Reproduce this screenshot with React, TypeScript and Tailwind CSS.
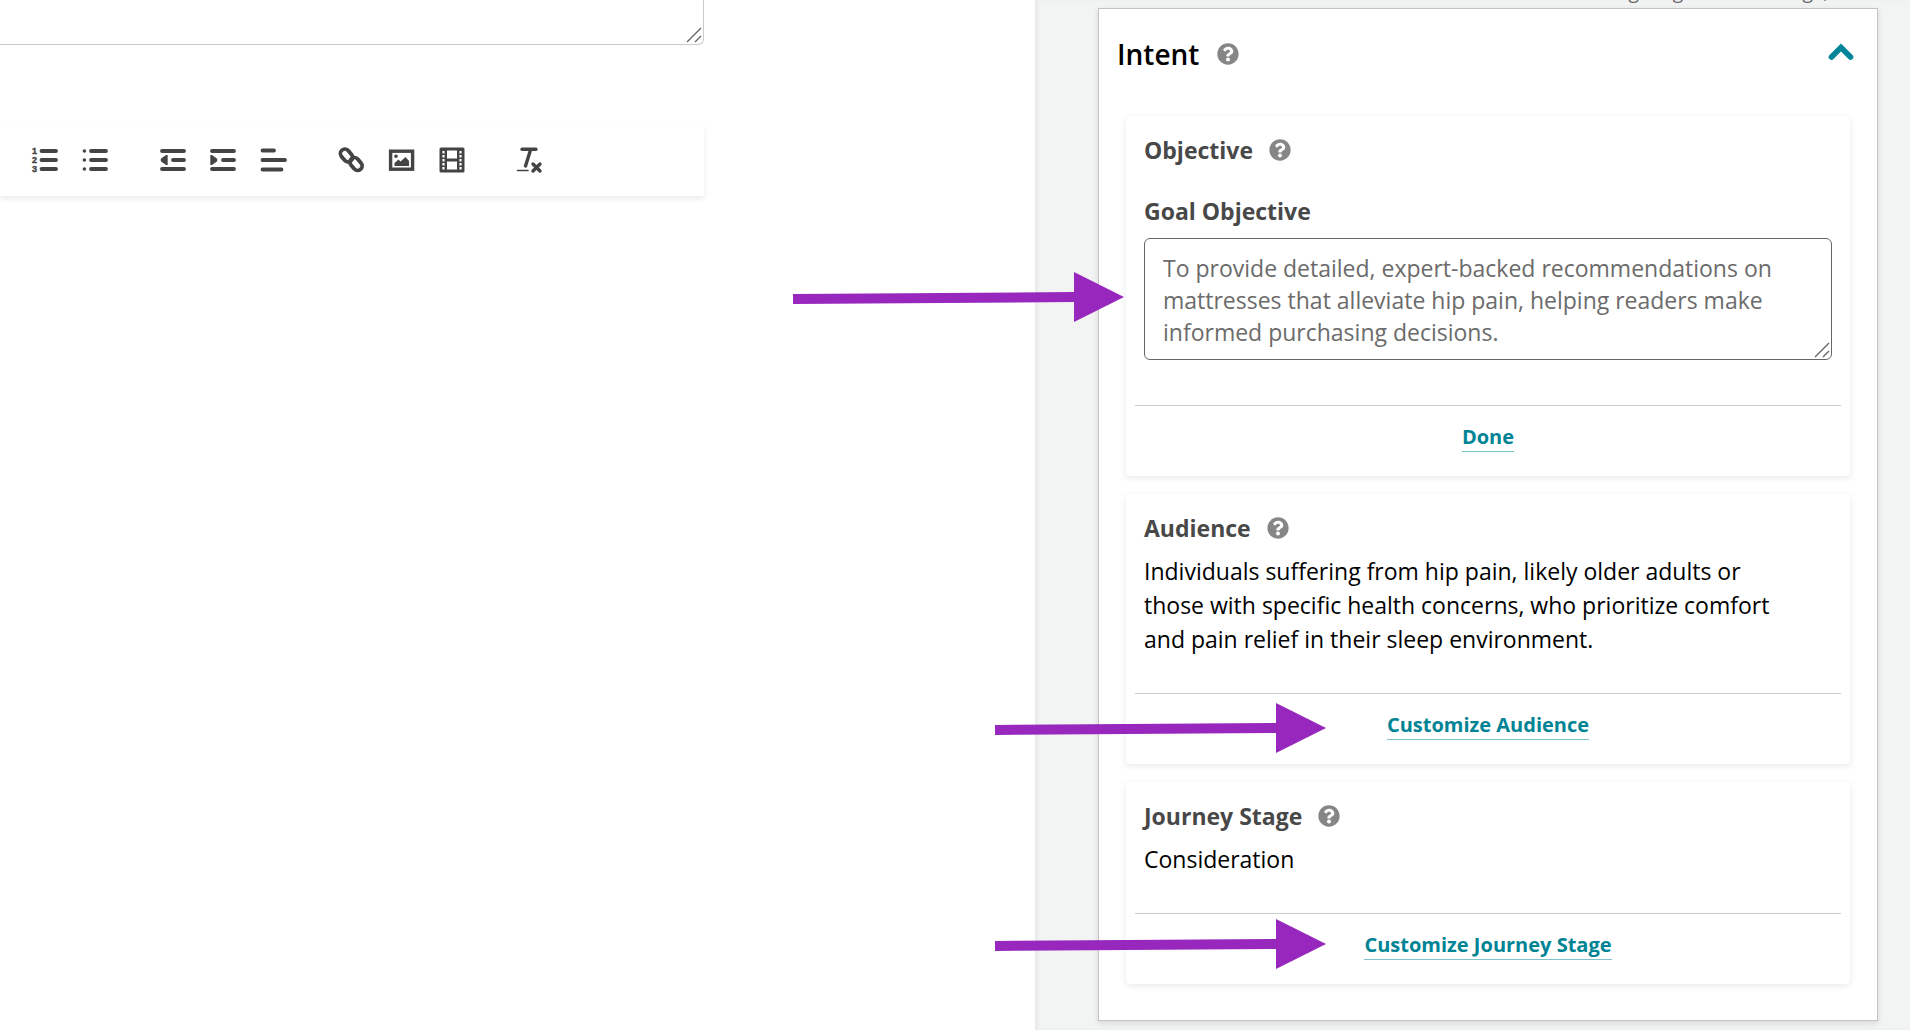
import type { ReactNode } from "react"
import { FaQuestionCircle } from "react-icons/fa"

const toolbarGroups = [
  [
    {
      label: "Numbered list",
      icon: (
        <>
          <g fontFamily="Liberation Sans" fontSize="9" fontWeight="700" fill="currentColor" stroke="currentColor" strokeWidth="0.4">
            <text x="0" y="7">1</text>
            <text x="0" y="16">2</text>
            <text x="0" y="25">3</text>
          </g>
          <path d="M9.5 4H24M9.5 13H24M9.5 22H24" />
        </>
      ),
    },
    {
      label: "Bulleted list",
      icon: (
        <>
          <path d="M9 4H24M9 13H24M9 22H24" />
          <g fill="currentColor" stroke="none">
            <circle cx="2.4" cy="4" r="1.8" />
            <circle cx="2.4" cy="13" r="1.8" />
            <circle cx="2.4" cy="22" r="1.8" />
          </g>
        </>
      ),
    },
  ],
  [
    {
      label: "Decrease indent",
      icon: (
        <>
          <path d="M2 4H24M13 13H24M2 22H24" />
          <path d="M7.7 8H6L1.2 11.5Q0 13 1.2 14.5L6 18H7.7Z" fill="currentColor" stroke="none" />
        </>
      ),
    },
    {
      label: "Increase indent",
      icon: (
        <>
          <path d="M2 4H24M13 13H24M2 22H24" />
          <path d="M0.3 8H2L6.8 11.5Q8 13 6.8 14.5L2 18H0.3Z" fill="currentColor" stroke="none" />
        </>
      ),
    },
    { label: "Align left", icon: <path d="M2.5 3.5H14M2.5 13H25M2.5 22.5H21.5" /> },
  ],
  [
    {
      label: "Insert link",
      icon: (
        <>
          <rect x="1.5" y="4" width="14" height="9" rx="4.5" transform="rotate(50 8.5 8.5)" />
          <rect x="11" y="12.5" width="14" height="9" rx="4.5" transform="rotate(50 18 17)" />
        </>
      ),
    },
    {
      label: "Insert image",
      icon: (
        <>
          <rect x="2.6" y="4.2" width="22" height="18" strokeWidth="3.4" />
          <circle cx="8" cy="9.3" r="1.8" fill="currentColor" stroke="none" />
          <path d="M6.5 19V16L10.5 12.5L12.5 14.5L17.5 10L21 14V19Z" fill="currentColor" stroke="none" />
        </>
      ),
    },
    {
      label: "Insert video",
      icon: (
        <>
          <path
            d="M2.5 0.5H25Q26.5 0.5 26.5 2V24Q26.5 25.5 25 25.5H3Q1.5 25.5 1.5 24V2Q1.5 0.5 3 0.5ZM9 3.5V11.5H19V3.5ZM9 14.5V22.5H19V14.5Z"
            fill="currentColor"
            fillRule="evenodd"
            stroke="none"
          />
          <path d="M5.5 4V23M22.5 4V23" stroke="#fff" strokeWidth="2.2" strokeDasharray="2.6 1.4" strokeLinecap="butt" />
        </>
      ),
    },
  ],
  [
    {
      label: "Clear formatting",
      icon: (
        <>
          <path d="M6 2.2H20M14.5 3L9.5 19" strokeWidth="3.4" />
          <path d="M1.5 23.5H12" strokeWidth="1.6" />
          <path d="M17 17L24 24M24 17L17 24" strokeWidth="3.4" />
        </>
      ),
    },
  ],
]

function Toolbar() {
  return (
    <div role="toolbar" aria-label="Formatting" className="flex items-center gap-[52px] h-[72px] pl-8 bg-white text-[#444] shadow-[0_3px_6px_rgba(0,0,0,0.08)]">
      {toolbarGroups.map((group, i) => (
        <div key={i} className="flex gap-6">
          {group.map((tool) => (
            <button key={tool.label} type="button" aria-label={tool.label} className="w-[26px] h-[26px]">
              <svg
                viewBox="0 0 26 26"
                fill="none"
                stroke="currentColor"
                strokeWidth="3.8"
                strokeLinecap="round"
                className="block w-full h-full overflow-visible"
              >
                {tool.icon}
              </svg>
            </button>
          ))}
        </div>
      ))}
    </div>
  )
}

function ResizeGrip() {
  return (
    <svg
      viewBox="0 0 16 16"
      className="absolute right-[2px] bottom-[2px] w-4 h-4 pointer-events-none"
      fill="none"
      stroke="#666"
      strokeWidth="1.4"
    >
      <path d="M1 15L15 1M9 15L15 9" />
    </svg>
  )
}

function Arrow({ className }: { className: string }) {
  return (
    <svg viewBox="0 0 331 50" className={`absolute w-[331px] h-[50px] z-10 pointer-events-none fill-[#9727bd] ${className}`}>
      <path d="M0 22L281 20V0L331 25L281 50V30L0 32Z" />
    </svg>
  )
}

function Help({ topic }: { topic: string }) {
  return (
    <button type="button" aria-label={`Help: ${topic}`} className="text-[#868686]">
      <FaQuestionCircle className="block w-[22px] h-[22px]" />
    </button>
  )
}

type CardProps = {
  title: string
  action: string
  arrow?: string
  children: ReactNode
}

function Card({ title, action, arrow, children }: CardProps) {
  return (
    <section className="bg-white rounded-[4px] shadow-[0_2px_7px_rgba(0,0,0,0.09)] px-[9px]">
      <div className="px-[9px] pt-[17px] pb-[37px]">
        <div className="flex items-center gap-4">
          <h3 className="text-[23px] leading-[34px] font-bold text-[#484848]">{title}</h3>
          <Help topic={title} />
        </div>
        {children}
      </div>
      <div className="relative border-t border-[#ccc] h-[71px] pt-[17px] text-center">
        {arrow && <Arrow className={arrow} />}
        <a href="#" className="inline-block text-xl leading-7 font-bold text-[#008495] border-b border-[#80c1ca]">
          {action}
        </a>
      </div>
    </section>
  )
}

export default function App() {
  return (
    <div className="flex min-h-screen bg-white text-black font-['Open_Sans','Noto_Sans',sans-serif]">
      {/* Editor */}
      <main className="flex-1 min-w-0 pr-[331px]">
        <div className="relative">
          <textarea
            aria-label="Summary"
            className="block w-full h-[45px] resize-none outline-none border-r border-b border-[#ccc] rounded-br-[6px]"
          />
          <ResizeGrip />
        </div>
        <div className="mt-[79px]">
          <Toolbar />
        </div>
      </main>

      {/* Sidebar */}
      <aside className="w-[875px] shrink-0 bg-[#f2f4f4] pl-[63px] pr-8 pb-[9px] shadow-[inset_3px_0_3px_rgba(0,0,0,0.04)]">
        <div className="flex items-end justify-end h-2 overflow-hidden">
          <p className="text-[19px] text-[#666] leading-[26px] whitespace-nowrap pr-1 pb-[3px]">right age and the usage, tone</p>
        </div>
        <section className="bg-white border border-[#c4c4c4] shadow-[0_2px_6px_rgba(0,0,0,0.12)] px-[27px] pb-9">
          <header className="flex items-center justify-between h-[107px] -ml-[9px] pb-[18px]">
            <div className="flex items-center gap-[18px]">
              <h2 className="text-[28px] leading-9 font-semibold">Intent</h2>
              <Help topic="Intent" />
            </div>
            <button type="button" aria-label="Collapse Intent" className="-mr-1 pb-1">
              <svg viewBox="0 0 26 18" className="block w-[26px] h-[18px]" fill="none" stroke="#008499" strokeWidth="5.6" strokeLinecap="round">
                <path d="M3.5 14L13 4.5L22.5 14" />
              </svg>
            </button>
          </header>

          <div className="flex flex-col gap-[18px]">
            <Card title="Objective" action="Done">
              <label htmlFor="goal" className="block mt-[27px] text-[23px] leading-[34px] font-bold text-[#484848]">
                Goal Objective
              </label>
              <div className="relative mt-[10px] mb-2">
                <Arrow className="-left-[351px] top-[34px]" />
                <textarea
                  id="goal"
                  rows={3}
                  className="block w-full h-[122px] resize-none overflow-hidden border border-[#666] rounded-[6px] px-[18px] py-[13px] text-[23px] leading-8 text-[#6b6b6b]"
                  defaultValue="To provide detailed, expert-backed recommendations on mattresses that alleviate hip pain, helping readers make informed purchasing decisions."
                />
                <ResizeGrip />
              </div>
            </Card>
            <Card title="Audience" action="Customize Audience" arrow="-left-[140px] top-[9px]">
              <p className="mt-[9px] pr-9 text-[23px] leading-[34px]">
                Individuals suffering from hip pain, likely older adults or those with specific health concerns, who
                prioritize comfort and pain relief in their sleep environment.
              </p>
            </Card>
            <Card title="Journey Stage" action="Customize Journey Stage" arrow="-left-[140px] top-[5px]">
              <p className="mt-[9px] text-[23px] leading-[34px]">Consideration</p>
            </Card>
          </div>
        </section>
      </aside>
    </div>
  )
}
